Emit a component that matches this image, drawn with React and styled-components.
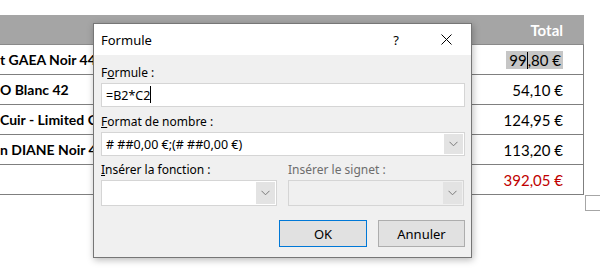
import React from 'react'
import styled, { createGlobalStyle } from 'styled-components'

const GlobalStyle = createGlobalStyle`
  body {
    margin: 0;
    background: #fff;
  }
`;

const Page = styled.div`
  position: relative;
  width: 600px;
  height: 276px;
  overflow: hidden;
  padding-top: 15px;
  box-sizing: border-box;
  font-family: Lato, "Open Sans", sans-serif;
`;

const Table = styled.div`
  width: 584px;
  display: grid;
  grid-template-columns: 1fr 120px;
`;

const HeadCell = styled.div`
  height: 29px;
  background: #a5a5a5;
  color: #fff;
  font-weight: bold;
  font-size: 15px;
  display: flex;
  align-items: center;
  justify-content: ${p => (p.right ? 'flex-end' : 'flex-start')};
  padding-right: ${p => (p.right ? '21px' : '0')};
  border-bottom: 1px solid #8a8a8a;
`;

const Cell = styled.div`
  height: 30px;
  box-sizing: border-box;
  border-bottom: 1px solid #7f7f7f;
  border-right: ${p => (p.right ? '1px solid #7f7f7f' : 'none')};
  display: flex;
  align-items: center;
  justify-content: ${p => (p.right ? 'flex-end' : 'flex-start')};
  padding-right: ${p => (p.right ? '20px' : '0')};
  font-size: ${p => (p.bold ? '14px' : '15px')};
  font-weight: ${p => (p.bold ? 'bold' : 'normal')};
  color: ${p => p.color || '#000'};
  white-space: nowrap;
  overflow: hidden;
`;

const Selected = styled.span`
  background: #c6c6c6;
  padding: 0 2px 0 3px;
  line-height: 18px;
`;

const Caret = styled.span`
  display: inline-block;
  width: 1px;
  height: 17px;
  background: #000;
  vertical-align: -3px;
`;

const MarkerRow = styled.div`
  padding-left: 585px;
`;

const Marker = styled.div`
  width: 16px;
  height: 16px;
  box-sizing: border-box;
  border: 1px solid #a6a6a6;
  border-right: none;
`;

const Dialog = styled.div`
  position: absolute;
  left: 93px;
  top: 23px;
  width: 379px;
  height: 235px;
  box-sizing: border-box;
  border: 1px solid #767676;
  background: #f0f0f0;
  box-shadow: 1px 2px 7px rgba(0, 0, 0, 0.28);
  font-family: "Noto Sans", "Open Sans", sans-serif;
  font-size: 12px;
  color: #000;
  display: flex;
  flex-direction: column;
`;

const TitleBar = styled.div`
  height: 31px;
  background: #fff;
  display: flex;
  align-items: center;
  padding-left: 7px;
`;

const Title = styled.div`
  flex: 1;
  font-size: 13px;
`;

const TitleButton = styled.div`
  width: 50px;
  height: 31px;
  display: flex;
  align-items: center;
  justify-content: center;
  font-size: 13px;
`;

const Body = styled.div`
  flex: 1;
  padding: 9px 6px 0 7px;
  display: flex;
  flex-direction: column;
`;

const Label = styled.div`
  height: 18px;
  line-height: 18px;
  margin-top: ${p => p.top || 0}px;
  margin-bottom: 1px;
  color: ${p => (p.disabled ? '#6d6d6d' : '#000')};
  white-space: nowrap;
`;

const Key = styled.span`
  text-decoration: underline;
`;

const Field = styled.div`
  height: ${p => p.h || 24}px;
  box-sizing: border-box;
  border: 1px solid #d5d5d5;
  background: ${p => (p.disabled ? '#f0f0f0' : '#fff')};
  display: flex;
  align-items: center;
  padding-left: 4px;
  padding-right: ${p => (p.select ? '1px' : '0')};
`;

const FieldText = styled.div`
  flex: 1;
  white-space: nowrap;
  font-size: 12.5px;
`;

const DropButton = styled.div`
  width: 19px;
  align-self: stretch;
  margin: 1px 0;
  background: #e3e3e3;
  display: flex;
  align-items: center;
  justify-content: center;
`;

const TwoCols = styled.div`
  display: grid;
  grid-template-columns: 176px 176px;
  column-gap: 11px;
`;

const Buttons = styled.div`
  display: flex;
  justify-content: flex-end;
  gap: 11px;
  margin-top: 14px;
`;

const Button = styled.div`
  width: ${p => p.w}px;
  height: 27px;
  box-sizing: border-box;
  border: 1px solid ${p => (p.primary ? '#0078d7' : '#adadad')};
  background: #e1e1e1;
  display: flex;
  align-items: center;
  justify-content: center;
  font-size: 13px;
`;

const Chevron = () => (
  <svg width="9" height="6" viewBox="0 0 9 6">
    <polyline points="0.5,0.8 4.5,4.8 8.5,0.8" fill="none" stroke="#7a7a7a" strokeWidth="1" />
  </svg>
);

const CloseIcon = () => (
  <svg width="11" height="11" viewBox="0 0 11 11">
    <path d="M0.5 0.5 L10.5 10.5 M10.5 0.5 L0.5 10.5" stroke="#000" strokeWidth="1" />
  </svg>
);

const rows = [
  { name: 't GAEA Noir 44', total: null },
  { name: 'O Blanc 42', total: '54,10 €' },
  { name: 'Cuir - Limited C', total: '124,95 €' },
  { name: 'n DIANE Noir 44', total: '113,20 €' },
];

const App = () => {
  return (
    <Page>
      <GlobalStyle />
      <Table>
        <HeadCell />
        <HeadCell right>Total</HeadCell>
        {rows.map((r, i) => (
          <React.Fragment key={i}>
            <Cell bold>{r.name}</Cell>
            <Cell right>
              {r.total || (
                <Selected>
                  99<Caret />,80 €
                </Selected>
              )}
            </Cell>
          </React.Fragment>
        ))}
        <Cell />
        <Cell right color="#c00000">392,05 €</Cell>
      </Table>
      <MarkerRow>
        <Marker />
      </MarkerRow>

      <Dialog>
        <TitleBar>
          <Title>Formule</Title>
          <TitleButton>?</TitleButton>
          <TitleButton><CloseIcon /></TitleButton>
        </TitleBar>
        <Body>
          <Label>F<Key>o</Key>rmule :</Label>
          <Field>
            <FieldText>=B2*C2<Caret /></FieldText>
          </Field>
          <Label top={6}><Key>F</Key>ormat de nombre :</Label>
          <Field select>
            <FieldText># ##0,00 €;(# ##0,00 €)</FieldText>
            <DropButton><Chevron /></DropButton>
          </Field>
          <TwoCols>
            <div>
              <Label top={5}><Key>I</Key>nsérer la fonction :</Label>
              <Field select h={26}>
                <FieldText />
                <DropButton><Chevron /></DropButton>
              </Field>
            </div>
            <div>
              <Label top={5} disabled>Insérer le signet :</Label>
              <Field select disabled h={26}>
                <FieldText />
                <DropButton><Chevron /></DropButton>
              </Field>
            </div>
          </TwoCols>
          <Buttons>
            <Button primary w={88}>OK</Button>
            <Button w={87}>Annuler</Button>
          </Buttons>
        </Body>
      </Dialog>
    </Page>
  )
}

export default App
